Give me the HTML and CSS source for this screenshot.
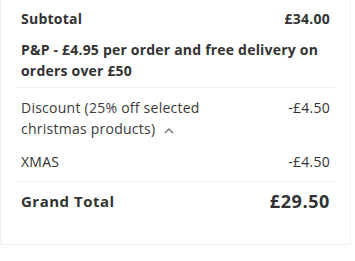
FILE: index.html
```html
<!DOCTYPE html>
<html>
<head>
<meta charset="utf-8">
<link rel="stylesheet" href="styles.css">
</head>
<body>
<div class="card">
  <div class="section">
    <div class="row strong">
      <span>Subtotal</span>
      <span>£34.00</span>
    </div>
    <div class="note">P&amp;P - £4.95 per order and free delivery on orders over £50</div>
  </div>
  <div class="section">
    <div class="row first">
      <span class="label">Discount (25% off selected christmas products)
        <svg class="chev" width="10" height="7" viewBox="0 0 10 7"><path d="M1 6 L5 2 L9 6" fill="none" stroke="#777" stroke-width="1.4"/></svg>
      </span>
      <span>-£4.50</span>
    </div>
    <div class="row code">
      <span>XMAS</span>
      <span>-£4.50</span>
    </div>
  </div>
  <div class="section total">
    <div class="row grand">
      <span class="glabel">Grand Total</span>
      <span class="gval">£29.50</span>
    </div>
  </div>
</div>
</body>
</html>
```

FILE: styles.css
```css
html, body {
  margin: 0;
  padding: 0;
  background: #fff;
}
body {
  font-family: "Open Sans", "Noto Sans", sans-serif;
  color: #333;
}
.card {
  width: 349px;
  margin-top: -10px;
  border: 1px solid #f0f0f0;
  border-radius: 2px;
  background: #fff;
}
.section {
  margin: 0 15px;
  padding: 0 5px;
  border-bottom: 1px solid #eeeeee;
}
.section.total {
  border-bottom: none;
  padding-bottom: 32px;
}
.row {
  display: flex;
  justify-content: space-between;
  align-items: flex-start;
  font-size: 14px;
  line-height: 21px;
  letter-spacing: 0.25px;
}
.strong {
  font-weight: 700;
  padding-top: 17px;
}
.note {
  font-size: 14px;
  font-weight: 700;
  line-height: 21px;
  letter-spacing: 0.2px;
  padding-top: 10px;
  padding-bottom: 6px;
  width: 305px;
}
.first {
  padding-top: 9px;
}
.label {
  width: 205px;
  color: #3a3a3a;
}
.chev {
  margin-left: 5px;
  vertical-align: middle;
}
.code {
  padding-top: 12px;
  padding-bottom: 9px;
}
.grand {
  align-items: center;
  padding-top: 9px;
}
.glabel {
  font-size: 15px;
  font-weight: 700;
  letter-spacing: 0.5px;
}
.gval {
  font-size: 18px;
  font-weight: 700;
  letter-spacing: 0.6px;
}
```
